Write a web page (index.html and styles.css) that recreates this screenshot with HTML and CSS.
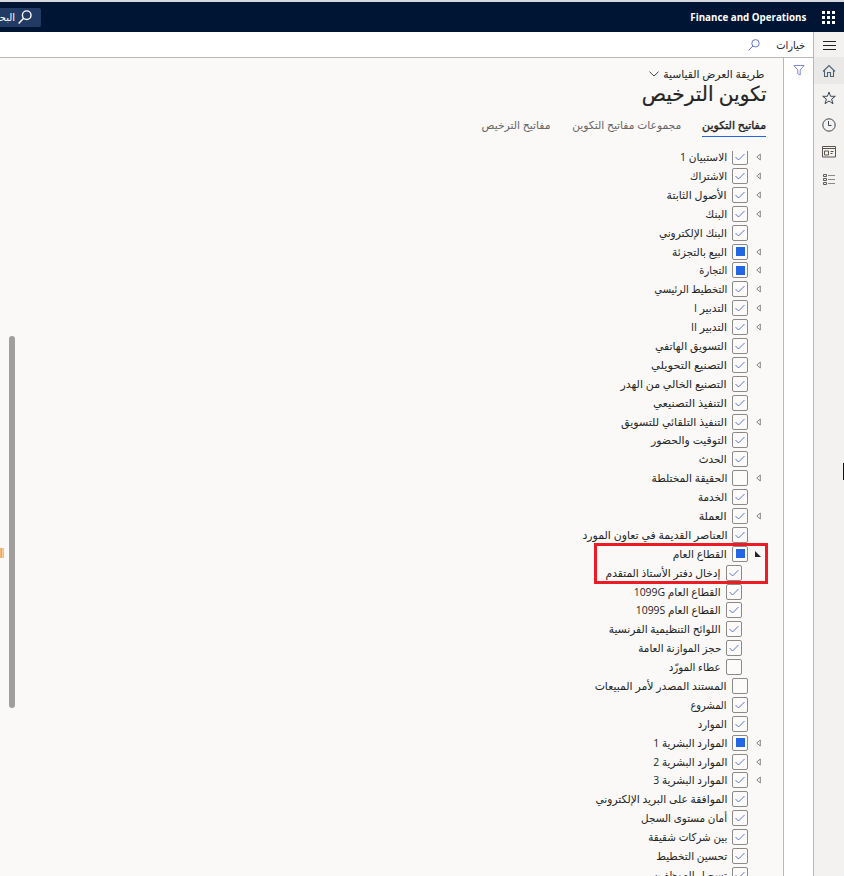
FILE: index.html
```html
<!DOCTYPE html>
<html lang="ar" dir="rtl">
<head>
<meta charset="utf-8">
<title>Finance and Operations</title>
<link rel="stylesheet" href="styles.css">
</head>
<body>
<header class="topbar">
  <svg class="waffle" width="13" height="13" viewBox="0 0 13 13" fill="#fff"><path d="M0 0h3v3H0zM5 0h3v3H5zM10 0h3v3h-3zM0 5h3v3H0zM5 5h3v3H5zM10 5h3v3h-3zM0 10h3v3H0zM5 10h3v3H5zM10 10h3v3h-3z"/></svg>
  <span class="brand" dir="ltr">Finance and Operations</span>
  <div class="search">
    <svg width="14" height="14" viewBox="0 0 14 14" fill="none" stroke="#fff" stroke-width="1.4"><circle cx="8.7" cy="5.2" r="4.3"/><path d="M5.6 8.3.6 13.4"/></svg>
    <span class="ar">البحث</span>
  </div>
</header>
<div class="shell">
  <nav class="rail">
    <div class="rail-item menu"><svg width="13" height="9" viewBox="0 0 13 9" stroke="#222" stroke-width="1"><path d="M0 .5h13M0 4.5h13M0 8.5h13"/></svg></div>
    <div class="rail-item active"><svg width="14" height="14" viewBox="0 0 14 14" fill="none" stroke="#4c6373" stroke-width="1.1"><path d="M1 7.500 7 1.500l6 6M2.500 6.500v6h3v-4h3v4h3v-6"/></svg></div>
    <div class="rail-item"><svg width="14" height="14" viewBox="0 0 14 14" fill="none" stroke="#3b474f" stroke-width="1"><path d="m7 1 1.600 4.300h4.700L9.600 8.100l1.400 4.600L7 10l-4 2.700 1.400-4.600L.7 5.300h4.700z"/></svg></div>
    <div class="rail-item"><svg width="14" height="14" viewBox="0 0 14 14" fill="none" stroke="#3b474f" stroke-width="1"><circle cx="7" cy="7" r="6.200"/><path d="M6.500 3v4.500H9.500"/></svg></div>
    <div class="rail-item"><svg width="14" height="12" viewBox="0 0 14 12" fill="none" stroke="#5a554c" stroke-width="1"><path d="M.5.500h13v10.500H.5zM.5 2.500h13M2.500 5h4v4h-4zM8.500 5.500h3M8.500 7.500h2"/></svg></div>
    <div class="rail-item last"><svg width="14" height="12" viewBox="0 0 14 12" fill="none" stroke="#5b5b55" stroke-width="1"><path d="M1.500.500h3v2h-3zM1.500 4.500h3v2h-3zM1.500 8.500h3v2h-3z"/><path stroke="#888" d="M6 1.500h7M6 5.500h7M6 9.500h7"/></svg></div>
  </nav>
  <div class="workspace">
    <div class="actions">
      <span class="options ar">خيارات</span>
      <svg class="find" width="12" height="12" viewBox="0 0 12 12" fill="none" stroke="#6374dc" stroke-width="1"><circle cx="7.500" cy="4.300" r="3.700"/><path d="M4.900 7 .6 11.400"/></svg>
    </div>
    <div class="content">
      <aside class="filter"><svg width="12" height="12" viewBox="0 0 12 12" fill="none" stroke="#7c8be0" stroke-width="1"><path d="M.8 1.500h10.400L7.200 6v5L4.800 9.700V6z"/></svg></aside>
      <main class="page">
        <div class="view"><span class="ar view-name">طريقة العرض القياسية</span><svg class="chevron" width="10" height="6" viewBox="0 0 10 6" fill="none" stroke="#444"><path d="m.5.700 4.500 4.300L9.500.700"/></svg></div>
        <h1 class="ar title">تكوين الترخيص</h1>
        <div class="tabs">
          <span class="tab selected"><span class="ar">مفاتيح التكوين</span></span>
          <span class="tab"><span class="ar">مجموعات مفاتيح التكوين</span></span>
          <span class="tab"><span class="ar">مفاتيح الترخيص</span></span>
        </div>
        <ul class="tree" id="tree"></ul>
      </main>
    </div>
  </div>
</div>
<div class="scroll-thumb"></div>
<div class="splitter"></div>
<div class="edge-mark"></div>
<div class="highlight"></div>
<script src="tree.js"></script>
</body>
</html>
```
FILE: tree.js
```js
// [label, state (c checked, p partial, n empty), kind (x expandable, o open, k child), label width]
const keys = [
  ["الاستبيان 1","c","x",47],["الاشتراك","c","x",37],["الأصول الثابتة","c","x",60],["البنك","c","x",22],
  ["البنك الإلكتروني","c","",68],["البيع بالتجزئة","p","x",55],["التجارة","p","x",28],["التخطيط الرئيسي","c","x",73],
  ["التدبير I","c","x",33],["التدبير II","c","x",36],["التسويق الهاتفي","c","",72],["التصنيع التحويلي","c","x",76],
  ["التصنيع الخالي من الهدر","c","",106],["التنفيذ التصنيعي","c","",74],["التنفيذ التلقائي للتسويق","c","x",106],
  ["التوقيت والحضور","c","",76],["الحدث","c","",28],["الحقيقة المختلطة","n","x",76],["الخدمة","c","",29],
  ["العملة","c","x",28],["العناصر القديمة في تعاون المورد","c","",145],["القطاع العام","p","o",54],
  ["إدخال دفتر الأستاذ المتقدم","c","k",115],["القطاع العام 1099G","c","k",87],["القطاع العام 1099S","c","k",85],
  ["اللوائح التنظيمية الفرنسية","c","k",112],["حجز الموازنة العامة","c","k",83],["عطاء المورّد","n","k",52],
  ["المستند المصدر لأمر المبيعات","n","",132],["المشروع","c","",36],["الموارد","c","",29],
  ["الموارد البشرية 1","p","x",74],["الموارد البشرية 2","c","x",74],["الموارد البشرية 3","c","x",74],
  ["الموافقة على البريد الإلكتروني","c","",132],["أمان مستوى السجل","c","",86],["بين شركات شقيقة","c","",79],
  ["تحسين التخطيط","c","",71],["تسجيل الموظفين","c","",74]
];
const marks = {
  c: '<svg width="10" height="8" viewBox="0 0 10 8" fill="none" stroke="#5872dc"><path d="M.5 4 3.500 7 9.500 1"/></svg>',
  p: '<i class="partial"></i>',
  n: ''
};
const arrows = {
  x: '<svg width="5" height="8" viewBox="0 0 5 8" fill="none" stroke="#777" stroke-width=".9"><path d="M4.300 1v6L.8 4z"/></svg>',
  o: '<svg width="6" height="6" viewBox="0 0 6 6" fill="#222"><path d="M0 0v6h6z"/></svg>'
};
document.getElementById("tree").innerHTML = keys.map(([text, state, kind, width]) =>
  `<li class="row${kind === "k" ? " child" : ""}"><span class="arrow">${arrows[kind] || ""}</span><span class="box">${marks[state]}</span><span class="ar label" data-w="${width}">${text}</span></li>`
).join("");
const fixed = [[".brand",116],[".options",29],[".view-name",101],[".title",125],[".tab:nth-child(1) .ar",64],[".tab:nth-child(2) .ar",109],[".tab:nth-child(3) .ar",69]];
fixed.forEach(([sel, w]) => { document.querySelector(sel).dataset.w = w; });
document.querySelectorAll("[data-w]").forEach(el => {
  const natural = el.getBoundingClientRect().width;
  el.style.transform = `scaleX(${el.dataset.w / natural})`;
  el.style.marginLeft = `${el.dataset.w - natural}px`;
});
```
FILE: styles.css
```css
* { box-sizing: border-box; }
body { margin: 0; height: 876px; overflow: hidden; position: relative; background: #faf9f8; color: #242424; font-family: "Open Sans", "DejaVu Sans", sans-serif; font-size: 11px; }
svg { display: block; flex: none; }
.ar { display: inline-block; white-space: nowrap; transform-origin: right center; flex: none; }
.topbar { height: 32px; border-top: 2px solid #d5d8dc; background: #001433; display: flex; align-items: center; color: #fff; padding-right: 9px; }
.waffle { margin-left: 16px; }
.brand { font-size: 11.4px; font-weight: 700; line-height: 16px; white-space: nowrap; transform-origin: right center; flex: none; }
.search { width: 41px; height: 19px; margin-right: auto; background: #223b64; border-radius: 0 2px 2px 0; display: flex; align-items: center; gap: 3px; padding-right: 9px; overflow: hidden; font-size: 10px; }
.shell { display: flex; height: 844px; }
.rail { width: 31px; flex: none; background: #f3f2f1; border-left: 1px solid #b9b8b7; }
.rail-item { height: 27px; display: flex; align-items: center; justify-content: center; }
.rail-item.menu { height: 25px; padding-top: 1px; }
.rail-item.active { background: #eae9e8; }
.rail-item.last { padding-top: 2px; }
.workspace { flex: 1; min-width: 0; display: flex; flex-direction: column; }
.actions { height: 26px; background: #fff; border-bottom: 1px solid #b9b8b7; display: flex; align-items: center; padding-right: 8px; }
.find { margin-right: 16px; }
.content { flex: 1; min-height: 0; display: flex; }
.filter { width: 30px; background: #fff; border-left: 1px solid #b9b8b7; padding: 6px 8px; flex: none; }
.page { flex: 1; min-width: 0; padding-right: 16px; overflow: hidden; }
.view { height: 16px; margin: 7px 3px 0 0; display: flex; align-items: center; gap: 4px; }
.chevron { margin-top: 2px; }
.title { font-size: 20.500px; font-weight: 400; line-height: 26px; margin: -1px 0 0; display: block; width: max-content; -webkit-text-stroke: .2px; }
.tabs { display: flex; gap: 21px; height: 31px; color: #666; padding-right: 1px; }
.tab { height: 31px; padding-top: 10px; line-height: 18px; border-bottom: 1px solid transparent; display: flex; }
.selected { color: #202020; border-color: #2266e3; -webkit-text-stroke: .35px; }
.tree { list-style: none; margin: 14px 0 0; padding: 0; height: 726px; overflow: hidden; }
.row { height: 18.900px; display: flex; align-items: center; position: relative; top: -3.400px; }
.arrow { width: 19px; padding-right: 6px; flex: none; }
.child .arrow { width: 25px; }
.box { width: 16px; height: 16px; flex: none; border: 1px solid #8b8a89; border-radius: 2px; margin-left: 5px; display: flex; align-items: center; justify-content: center; background: #fcfbfa; }
.partial { width: 9px; height: 9px; background: #2266e3; }
.label { line-height: 18px; }
.scroll-thumb { position: absolute; left: 9px; top: 336px; width: 6px; height: 372px; border-radius: 3px; background: #a19f9d; }
.splitter { position: absolute; left: 0; top: 548px; width: 4px; height: 10px; background: repeating-linear-gradient(90deg, #f8b878 0 1px, #94bbcf 1px 2px, #fad0a0 2px 3px); }
.edge-mark { position: absolute; right: 0; top: 463px; width: 1px; height: 17px; background: #111; }
.highlight { position: absolute; left: 594px; top: 543px; width: 174px; height: 41px; border: 3px solid #ed1c24; }
```
